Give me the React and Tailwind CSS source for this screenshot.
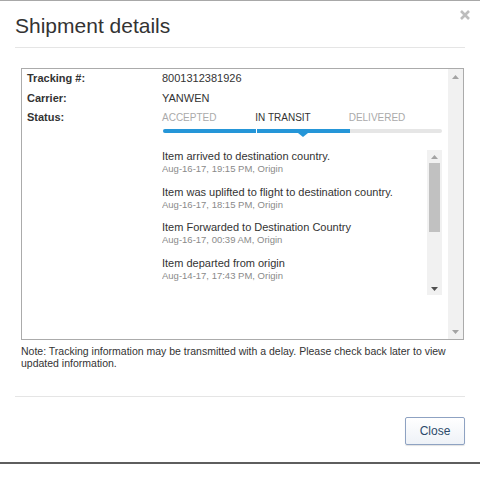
import React from "react";

const events = [
  { t: "Item arrived to destination country.", d: "Aug-16-17, 19:15 PM, Origin" },
  { t: "Item was uplifted to flight to destination country.", d: "Aug-16-17, 18:15 PM, Origin" },
  { t: "Item Forwarded to Destination Country", d: "Aug-16-17, 00:39 AM, Origin" },
  { t: "Item departed from origin", d: "Aug-14-17, 17:43 PM, Origin" },
];

function Up({ color }) {
  return (
    <svg width="7" height="4" viewBox="0 0 7 4">
      <path d="M0 4 L3.5 0 L7 4 Z" fill={color} />
    </svg>
  );
}
function Down({ color }) {
  return (
    <svg width="7" height="4" viewBox="0 0 7 4">
      <path d="M0 0 L3.5 4 L7 0 Z" fill={color} />
    </svg>
  );
}

export default function App() {
  return (
    <div
      className="w-[480px] h-[477px] bg-white text-[#333]"
      style={{ fontFamily: '"Liberation Sans", Arial, sans-serif' }}
    >
      <div className="relative h-[464px] border-t border-[#a8a8a8] border-b-2 border-b-[#5e5e5e]">
        {/* close */}
        <svg
          className="absolute left-[460px] top-[9px]"
          width="10"
          height="10"
          viewBox="0 0 10 10"
        >
          <path d="M1 1 L9 9 M9 1 L1 9" stroke="#bdbdbd" strokeWidth="2.6" />
        </svg>

        {/* header */}
        <div className="mx-[15px] h-[47px] border-b border-[#e5e5e5] pt-[13px]">
          <h1 className="text-[21px] leading-[24px] text-[#333]">Shipment details</h1>
        </div>

        {/* body */}
        <div className="ml-[21px] mt-[20px] w-[443px]">
          <div className="h-[272px] border border-[#ababab] flex">
            <div className="flex-1 pl-[5px]">
              <div className="flex text-[11px] leading-[19.5px]">
                <div className="w-[135px] font-bold">Tracking #:</div>
                <div>8001312381926</div>
              </div>
              <div className="flex text-[11px] leading-[19.5px]">
                <div className="w-[135px] font-bold">Carrier:</div>
                <div>YANWEN</div>
              </div>
              <div className="flex">
                <div className="w-[135px] font-bold text-[11px] leading-[19.5px]">Status:</div>
                <div className="w-[280px]">
                  <div className="grid grid-cols-3 text-[10px] leading-[19.5px] uppercase">
                    <div className="text-[#aaaaaa]">Accepted</div>
                    <div className="text-[#333]">In Transit</div>
                    <div className="text-[#aaaaaa]">Delivered</div>
                  </div>
                  <div className="relative mt-[1.5px] ml-[1px] h-[4px] w-[279px] rounded-full bg-[#e6e6e6]">
                    <div className="absolute left-0 top-0 h-[4px] w-[187px] rounded-l-full bg-[#2596d8]" />
                    <div className="absolute left-[93px] top-0 h-[4px] w-[1px] bg-white" />
                    <div className="absolute left-[135px] top-[4px] h-0 w-0 border-l-[5px] border-r-[5px] border-t-[4px] border-l-transparent border-r-transparent border-t-[#2596d8]" />
                  </div>
                  <div className="mt-[17px] flex h-[145px]">
                    <div className="flex-1 overflow-hidden">
                      {events.map((e, i) => (
                        <div key={i} className="mb-[10.5px]">
                          <div className="text-[11px] leading-[13px] text-[#333]">{e.t}</div>
                          <div className="text-[9.5px] leading-[12px] text-[#8a8a8a]">{e.d}</div>
                        </div>
                      ))}
                    </div>
                    <div className="w-[15px] bg-[#f1f1f1] flex flex-col items-center">
                      <div className="h-[13px] flex items-center justify-center">
                        <Up color="#a3a3a3" />
                      </div>
                      <div className="w-[11px] h-[69px] bg-[#c1c1c1]" />
                      <div className="flex-1" />
                      <div className="h-[13px] flex items-center justify-center">
                        <Down color="#505050" />
                      </div>
                    </div>
                  </div>
                </div>
              </div>
            </div>
            <div className="w-[15px] bg-[#f1f1f1] flex flex-col items-center justify-between">
              <div className="h-[15px] flex items-center justify-center">
                <Up color="#a3a3a3" />
              </div>
              <div className="h-[15px] flex items-center justify-center">
                <Down color="#a3a3a3" />
              </div>
            </div>
          </div>
          <p className="mt-[5px] text-[10.5px] leading-[12px] text-[#333]">
            Note: Tracking information may be transmitted with a delay. Please check back later to view updated information.
          </p>
        </div>

        {/* footer */}
        <div className="mx-[15px] mt-[27px] border-t border-[#e5e5e5] pt-[20px] flex justify-end">
          <button className="w-[60px] h-[28px] rounded-[2px] border border-[#8ea2c2] bg-gradient-to-b from-white to-[#eef2f7] text-[12px] text-[#2c4a6b] shadow-[0_1px_1px_rgba(0,0,0,0.12)]">
            Close
          </button>
        </div>
      </div>
    </div>
  );
}
